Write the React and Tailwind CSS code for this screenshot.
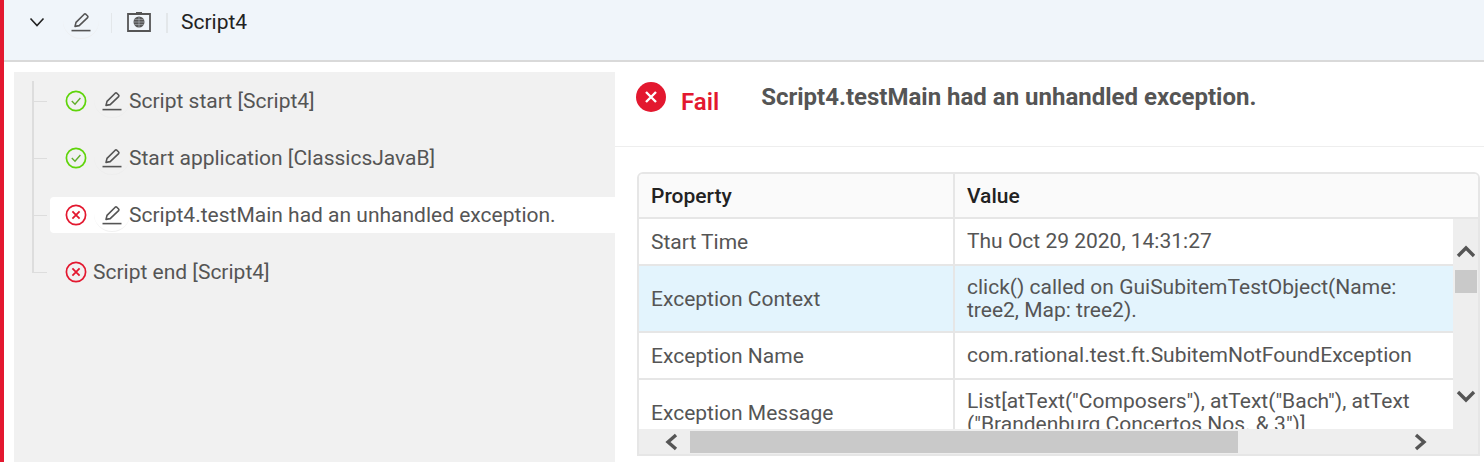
import React from "react";

const PencilIcon = () => (
  <span className="relative flex w-5 h-5 items-center justify-center shrink-0">
    <span className="absolute left-[-8px] top-[-9px] w-[36px] h-[36px] rounded-full border-b border-[#ececec] opacity-70"></span>
    <svg className="relative" width="20" height="20" viewBox="0 0 20 20" fill="none" stroke="#555555" strokeWidth="1.6">
      <path d="M4 14.4 L5 10.4 L13.2 2.2 Q14 1.5 14.8 2.2 L16.6 4 Q17.3 4.8 16.6 5.6 L8.2 13.6 Z" strokeLinejoin="round" />
      <path d="M0.5 18.6 H19.5" />
    </svg>
  </span>
);

const OkIcon = () => (
  <svg className="shrink-0" width="22" height="22" viewBox="0 0 22 22" fill="none">
    <circle cx="11" cy="11" r="9.6" stroke="#5fd40a" strokeWidth="1.7" />
    <path d="M6.8 11 L10 14.2 L15.4 8" stroke="#5fae2a" strokeWidth="1.4" />
  </svg>
);

const ErrIcon = () => (
  <svg className="shrink-0" width="22" height="22" viewBox="0 0 22 22" fill="none">
    <circle cx="11" cy="11" r="9.6" stroke="#e3182f" strokeWidth="1.7" />
    <path d="M7.4 7.4 L14.6 14.6 M14.6 7.4 L7.4 14.6" stroke="#e3182f" strokeWidth="1.8" />
  </svg>
);

const steps = [
  { text: "Script start [Script4]", ok: true, edit: true },
  { text: "Start application [ClassicsJavaB]", ok: true, edit: true },
  { text: "Script4.testMain had an unhandled exception.", ok: false, edit: true, selected: true },
  { text: "Script end [Script4]", ok: false, edit: false, last: true },
];

const rows = [
  { name: "Start Time", value: "Thu Oct 29 2020, 14:31:27", h: "h-[47px]" },
  { name: "Exception Context", value: "click() called on GuiSubitemTestObject(Name: tree2, Map: tree2).", h: "h-[67px]", active: true },
  { name: "Exception Name", value: "com.rational.test.ft.SubitemNotFoundException", h: "h-[47px]" },
  { name: "Exception Message", value: 'List[atText("Composers"), atText("Bach"), atText ("Brandenburg Concertos Nos. & 3")]', h: "h-[67px]" },
];

export default function App() {
  return (
    <div className="w-[1484px] h-[462px] overflow-hidden flex bg-white text-[21px] leading-[24px] text-[#555555] font-['Roboto',sans-serif]">
      <div className="w-1 bg-[#e3182f] shrink-0"></div>

      <div className="flex-1 flex flex-col min-w-0">
        {/* Header */}
        <div className="h-[62px] shrink-0 bg-[#f0f5fa] border-b-2 border-[#d9d9d9] flex items-start pt-[11px]">
          <svg className="ml-[25px] mt-[4px]" width="16" height="14" viewBox="0 0 16 14" fill="none" stroke="#222222" strokeWidth="1.6">
            <path d="M1.5 3.5 L8 10.5 L14.5 3.5" />
          </svg>
          <div className="ml-[26px] mt-px"><PencilIcon /></div>
          <div className="ml-[20px] mt-[2px] w-px h-[20px] bg-[#e3e7ea]"></div>
          <svg className="ml-[15px]" width="24" height="21" viewBox="0 0 24 21" fill="none">
            <path d="M1 3 H23 V20 H1 Z" stroke="#555555" strokeWidth="1.8" />
            <path d="M9 2 H15" stroke="#555555" strokeWidth="2" />
            <circle cx="12" cy="11" r="5.5" fill="#555555" />
            <path d="M6.5 11 H17.5 M7.4 8.4 H16.6 M7.4 13.6 H16.6 M12 5.5 V16.5" stroke="#b9c0c6" strokeWidth="0.6" />
          </svg>
          <div className="ml-[15px] mt-[2px] w-0.5 h-[20px] bg-[#e3e7ea]"></div>
          <span className="ml-[13px] -mt-px text-[#222222]">Script4</span>
        </div>

        <div className="flex-1 flex min-h-0 pt-[10px] pl-[10px]">
          {/* Steps tree */}
          <div className="w-[601px] shrink-0 bg-[#f1f1f1] pt-[9px]">
            {steps.map((step) => (
              <div key={step.text} className="flex h-[57px]">
                <div className={`ml-[18px] w-[15px] shrink-0 border-l-2 border-[#dddddd] ${step.last ? "h-[21px]" : ""}`}>
                  <div className="mt-[20px] h-px bg-[#dddddd]"></div>
                </div>
                <div className={`ml-[3px] flex-1 h-[36px] mt-[2px] flex items-center pl-[15px] rounded-l-sm ${step.selected ? "bg-white" : ""}`}>
                  {step.ok ? <OkIcon /> : <ErrIcon />}
                  {step.edit ? (
                    <>
                      <span className="ml-[15px]"><PencilIcon /></span>
                      <span className="ml-[7px]">{step.text}</span>
                    </>
                  ) : (
                    <span className="ml-[6px]">{step.text}</span>
                  )}
                </div>
              </div>
            ))}
          </div>

          {/* Details */}
          <div className="flex-1 flex flex-col min-w-0">
            <div className="h-[75px] shrink-0 border-b border-[#eeeeee] flex items-start pt-[10px] pl-[21px]">
              <svg className="shrink-0" width="30" height="30" viewBox="0 0 30 30" fill="none">
                <circle cx="15" cy="15" r="15" fill="#e3182f" />
                <path d="M10 10 L20 20 M20 10 L10 20" stroke="#ffffff" strokeWidth="2.4" />
              </svg>
              <span className="ml-[15px] mt-[5px] text-[24px] leading-[30px] font-semibold text-[#e3182f]">Fail</span>
              <span className="ml-[42px] text-[24px] leading-[30px] font-bold text-[#555555]">Script4.testMain had an unhandled exception.</span>
            </div>

            <div className="mt-[25px] ml-[22px] mr-1 flex-1 mb-[6px] border-2 border-[#e6e6e6] rounded-t-md flex flex-col overflow-hidden min-h-0">
              <div className="flex h-[45px] shrink-0 bg-[#fafafa] border-b-2 border-[#e6e6e6] font-medium text-[#222222]">
                <div className="w-[316px] shrink-0 border-r-2 border-[#e6e6e6] pl-3 flex items-center">Property</div>
                <div className="pl-3 flex items-center">Value</div>
              </div>

              <div className="flex-1 flex min-h-0 bg-[#eeeeee]">
                <div className="w-[814px] overflow-hidden shrink-0">
                  {rows.map((row) => (
                    <div key={row.name} className={`flex ${row.h} border-b-2 border-[#e6e6e6] ${row.active ? "bg-[#e3f4fd]" : "bg-white"}`}>
                      <div className="w-[316px] shrink-0 border-r-2 border-[#e6e6e6] pl-3 flex items-center">{row.name}</div>
                      <div className="flex-1 pl-3 pr-8 flex items-center leading-[23px]">{row.value}</div>
                    </div>
                  ))}
                </div>
                <div className="flex-1 flex flex-col items-center pt-[25px]">
                  <svg width="22" height="14" viewBox="0 0 22 14" fill="none" stroke="#555555" strokeWidth="3.4">
                    <path d="M3 12 L11 4 L19 12" />
                  </svg>
                  <div className="mt-[12px] w-[22px] h-[23px] bg-[#c9c9c9]"></div>
                  <svg className="mt-[97px]" width="22" height="14" viewBox="0 0 22 14" fill="none" stroke="#555555" strokeWidth="3.4">
                    <path d="M3 2 L11 10 L19 2" />
                  </svg>
                </div>
              </div>

              <div className="h-[25px] shrink-0 bg-[#eeeeee] flex items-center">
                <svg className="ml-[24px]" width="16" height="18" viewBox="0 0 16 18" fill="none" stroke="#555555" strokeWidth="3.4">
                  <path d="M13 2 L5 9 L13 16" />
                </svg>
                <div className="ml-[11px] w-[548px] h-[22px] bg-[#c9c9c9]"></div>
                <svg className="ml-[175px]" width="16" height="18" viewBox="0 0 16 18" fill="none" stroke="#555555" strokeWidth="3.4">
                  <path d="M3 2 L11 9 L3 16" />
                </svg>
              </div>
            </div>
          </div>
        </div>
      </div>
    </div>
  );
}
